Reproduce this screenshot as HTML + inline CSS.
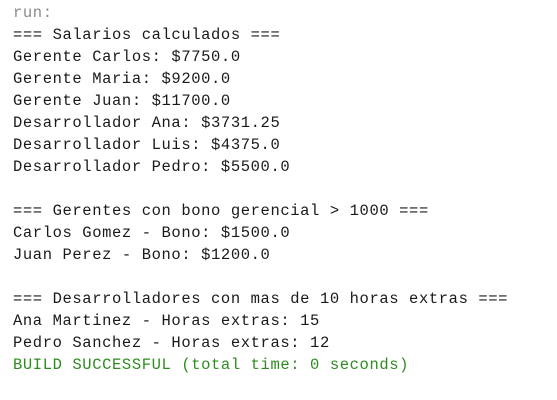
<!DOCTYPE html>
<html><head><style>
html,body{margin:0;padding:0;background:#fff;width:557px;height:400px;overflow:hidden}
pre{margin:0;position:absolute;left:13px;top:2px;font-family:"Liberation Mono",monospace;font-size:15.5px;letter-spacing:0.6px;line-height:22px;color:#1a1a1a}
.g{color:#8a8a8a}.s{color:#2e8b20}
</style></head><body>
<pre><span class="g">run:</span>
=== Salarios calculados ===
Gerente Carlos: $7750.0
Gerente Maria: $9200.0
Gerente Juan: $11700.0
Desarrollador Ana: $3731.25
Desarrollador Luis: $4375.0
Desarrollador Pedro: $5500.0

=== Gerentes con bono gerencial &gt; 1000 ===
Carlos Gomez - Bono: $1500.0
Juan Perez - Bono: $1200.0

=== Desarrolladores con mas de 10 horas extras ===
Ana Martinez - Horas extras: 15
Pedro Sanchez - Horas extras: 12
<span class="s">BUILD SUCCESSFUL (total time: 0 seconds)</span></pre>
</body></html>
